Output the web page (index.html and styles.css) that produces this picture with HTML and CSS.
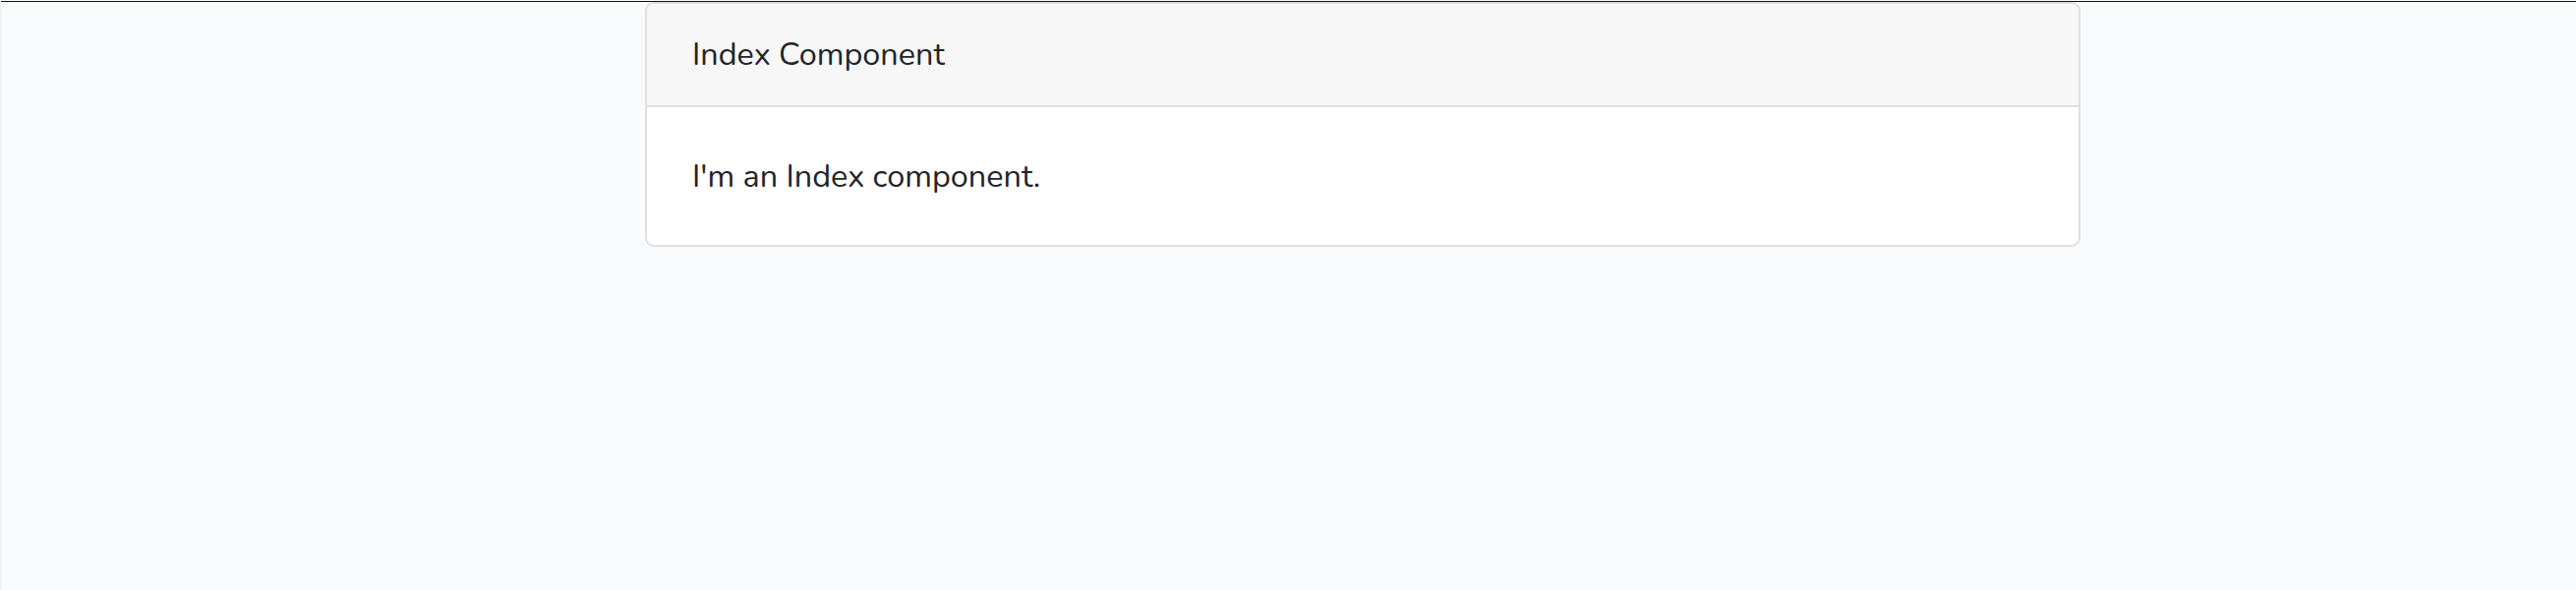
FILE: index.html
```html
<!DOCTYPE html>
<html>
<head>
<meta charset="utf-8">
<link rel="stylesheet" href="styles.css">
</head>
<body>
<div class="topline"></div>
<div class="page">
  <div class="card">
    <div class="card-header">Index Component</div>
    <div class="card-body">I'm an Index component.</div>
  </div>
</div>
</body>
</html>
```
FILE: styles.css
```css
html, body {
  margin: 0;
  padding: 0;
  height: 100%;
}
body {
  background: #f8fafc;
  font-family: "Nunito", "Lato", "Noto Sans", sans-serif;
  color: #212529;
  border-left: 1px solid #f0f0f0;
  box-sizing: border-box;
}
.topline {
  height: 1px;
  margin-top: 1px;
  background: #111;
}
.page {
  padding-left: 655px;
  padding-right: 504px;
}
.card {
  background: #fff;
  border: 2px solid #dfdfdf;
  border-radius: 9px;
  overflow: hidden;
}
.card-header {
  background: #f7f7f7;
  border-bottom: 2px solid #dfdfdf;
  padding: 26px 46px 27px;
  font-size: 32.4px;
  line-height: 50px;
}
.card-body {
  padding: 45px 46px 44px;
  font-size: 32.4px;
  line-height: 51px;
}
```
